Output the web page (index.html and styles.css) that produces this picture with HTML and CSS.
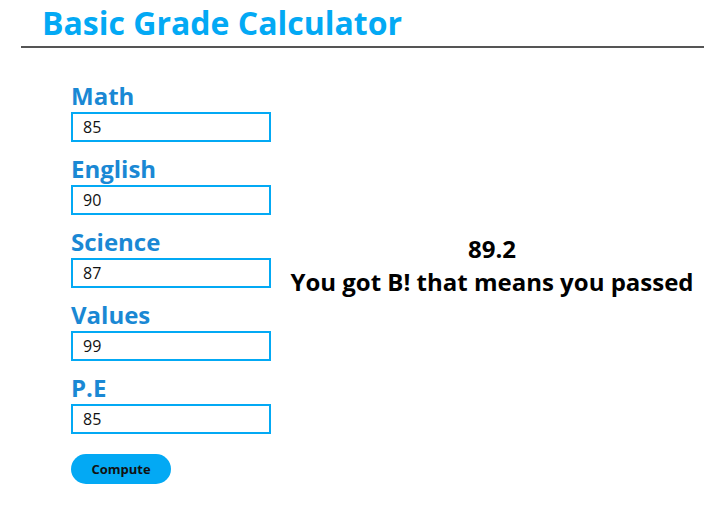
FILE: index.html
```html
<!DOCTYPE html>
<html>
<head>
<meta charset="utf-8">
<link rel="stylesheet" href="styles.css">
</head>
<body>
<header class="header">
  <h1 class="title">Basic Grade Calculator</h1>
</header>
<main class="main">
  <form class="form">
    <label class="field"><span class="label">Math</span><input class="input" value="85"></label>
    <label class="field"><span class="label">English</span><input class="input" value="90"></label>
    <label class="field"><span class="label">Science</span><input class="input" value="87"></label>
    <label class="field"><span class="label">Values</span><input class="input" value="99"></label>
    <label class="field"><span class="label">P.E</span><input class="input" value="85"></label>
    <button type="button" class="btn">Compute</button>
  </form>
  <section class="result">
    <div class="score">89.2</div>
    <div class="msg">You got B! that means you passed</div>
  </section>
</main>
</body>
</html>
```
FILE: styles.css
```css
html, body {
  margin: 0;
  padding: 0;
  background: #fff;
  font-family: "Open Sans", sans-serif;
}
.header {
  margin: 0 19px 0 21px;
  border-bottom: 2px solid #555;
}
.title {
  margin: 0;
  padding: 0 0 0 21px;
  font-size: 32px;
  line-height: 46px;
  font-weight: 700;
  color: #03a9f4;
}
.main {
  display: flex;
  padding: 34px 0 0 71px;
}
.form {
  display: flex;
  flex-direction: column;
  width: 200px;
}
.field {
  display: flex;
  flex-direction: column;
  margin-bottom: 13px;
}
.label {
  font-size: 24px;
  font-weight: 700;
  line-height: 28px;
  color: #1a88d4;
  margin-bottom: 2px;
}
.input {
  box-sizing: border-box;
  width: 200px;
  height: 30px;
  border: 2px solid #03a9f4;
  padding: 0 10px;
  font-family: "Open Sans", sans-serif;
  font-size: 16px;
  color: #111;
  outline: none;
}
.btn {
  margin-top: 7px;
  width: 100px;
  height: 30px;
  border: none;
  border-radius: 15px;
  background: #03a9f4;
  font-family: "Open Sans", sans-serif;
  font-weight: 700;
  font-size: 13px;
  color: #111;
  padding: 0;
}
.result {
  flex: 1;
  display: flex;
  flex-direction: column;
  align-items: center;
  padding: 150px 10px 0 0;
  font-size: 24px;
  font-weight: 700;
  line-height: 33px;
  color: #000;
}
```
